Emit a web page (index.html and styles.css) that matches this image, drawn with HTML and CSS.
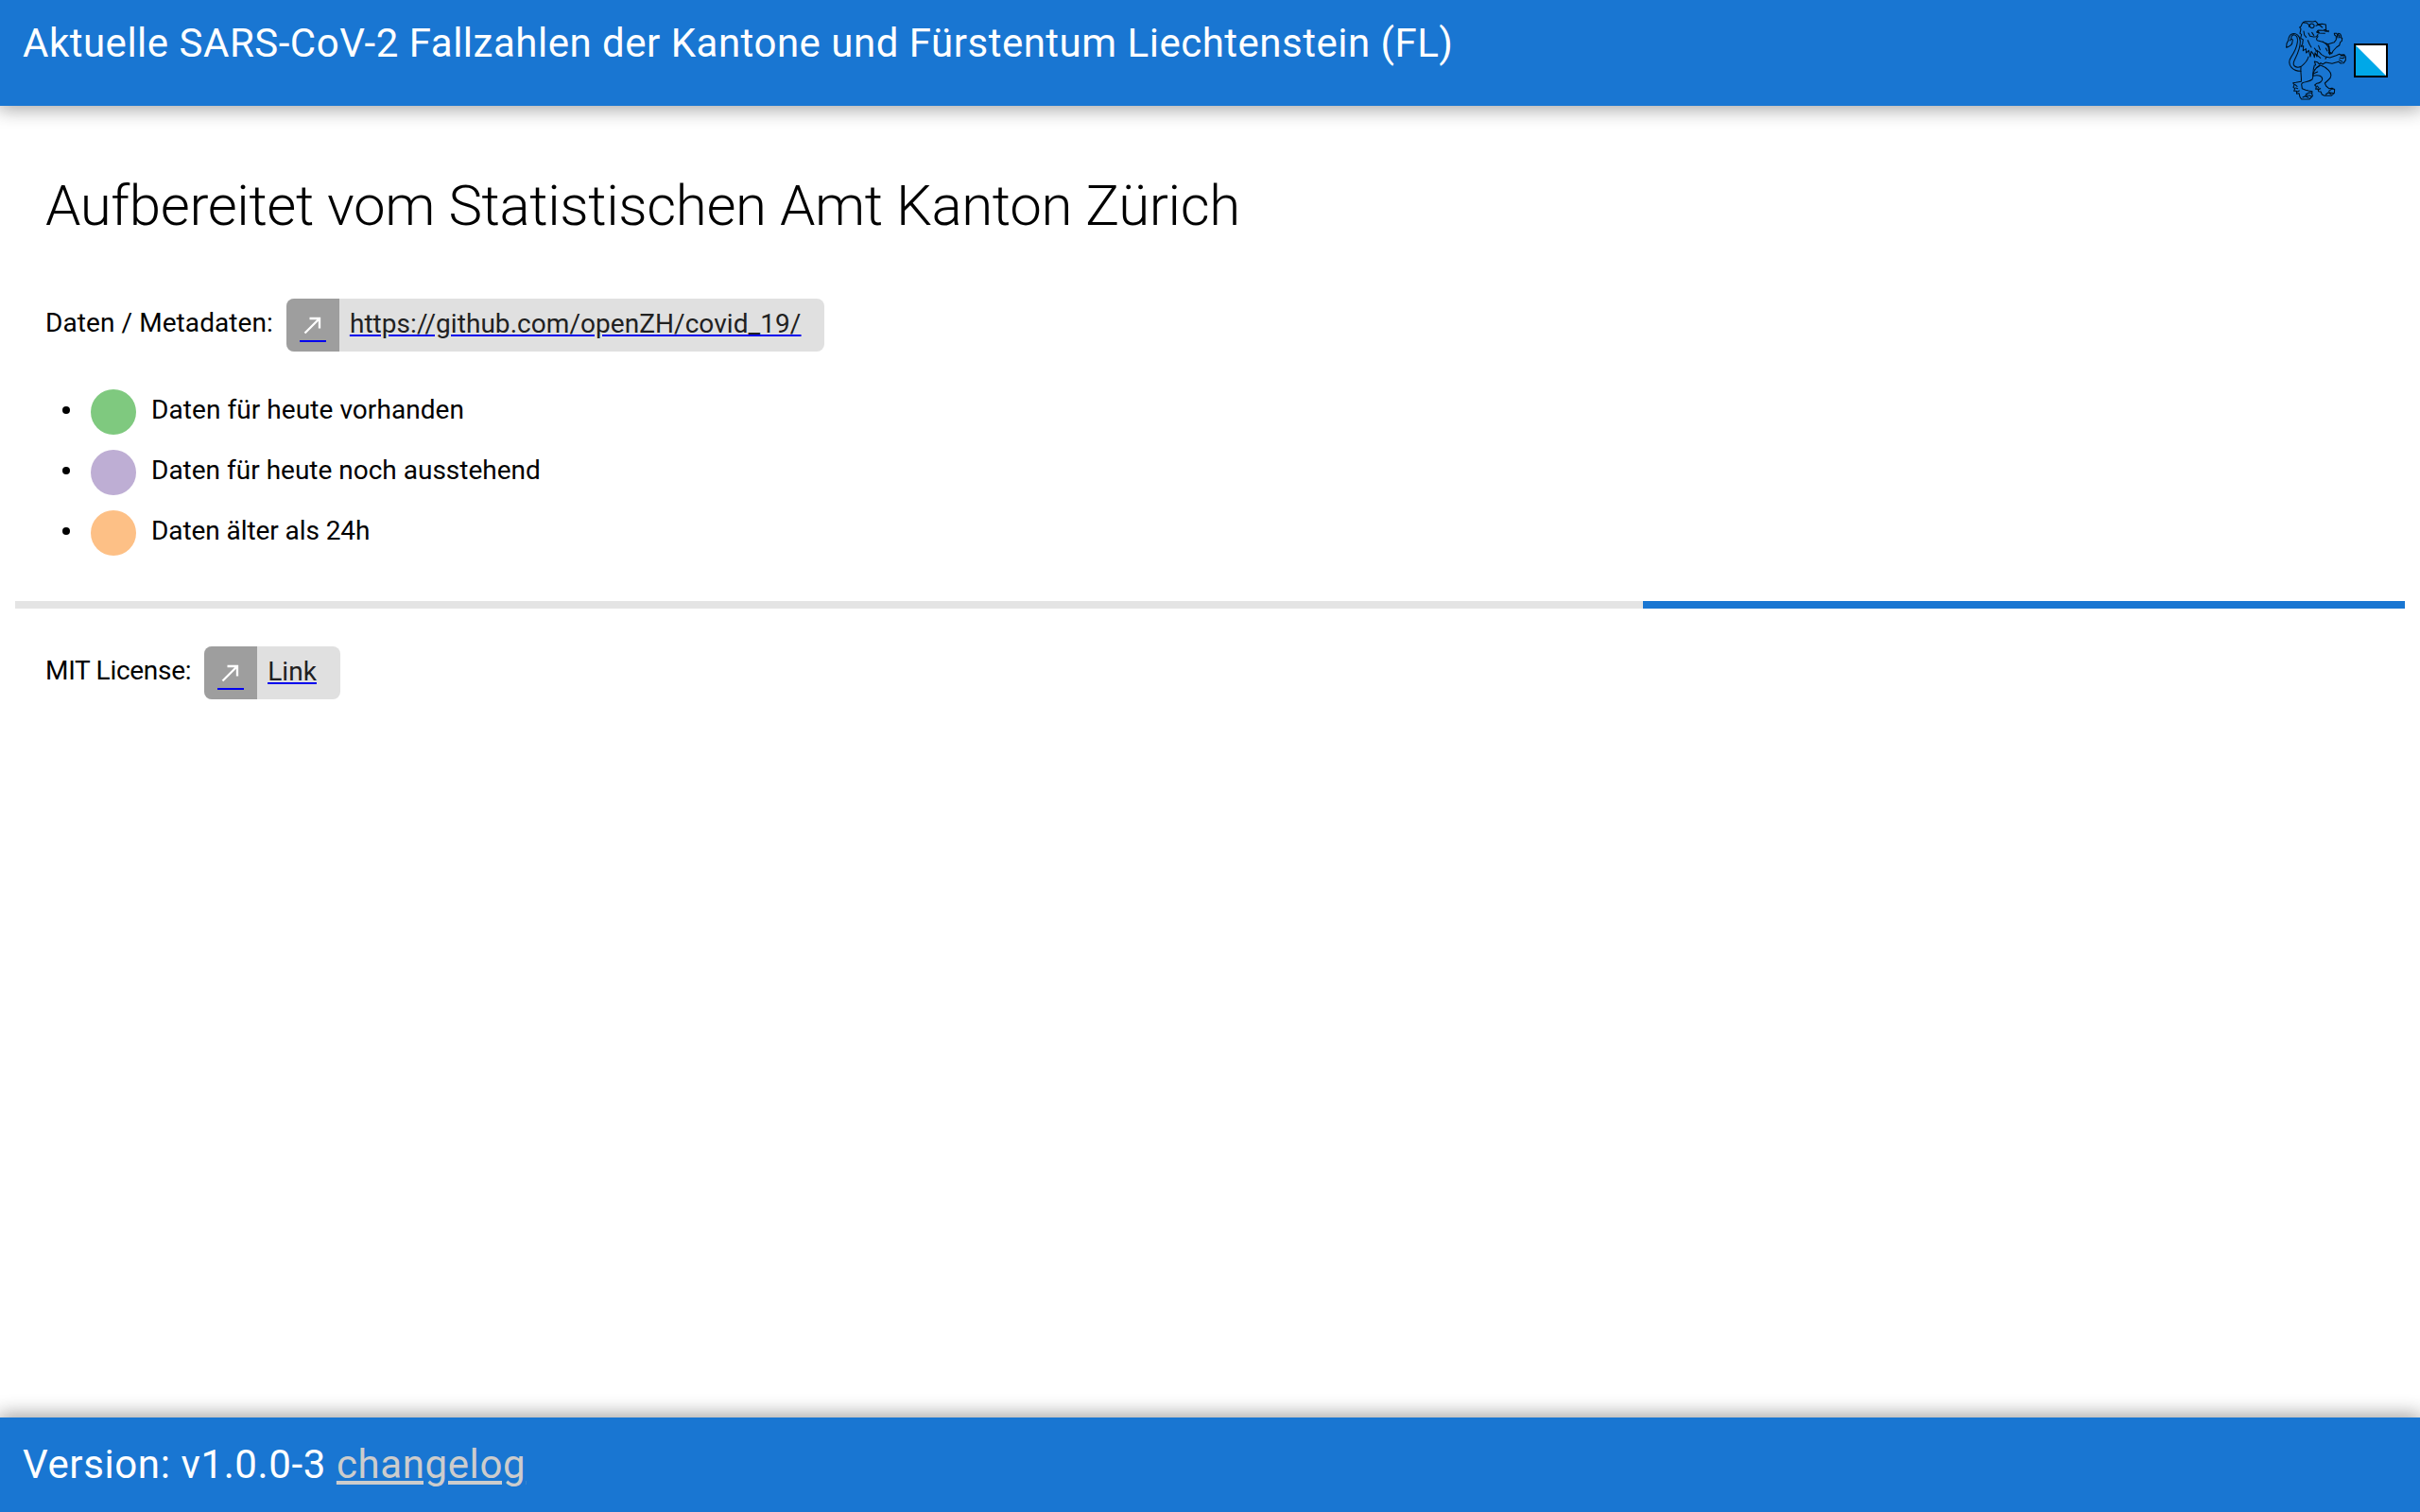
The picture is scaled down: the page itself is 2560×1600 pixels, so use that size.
FILE: index.html
```
<!DOCTYPE html>
<html lang="de">
<head>
<meta charset="utf-8">
<title>SARS-CoV-2 Fallzahlen</title>
<link rel="stylesheet" href="styles.css">
</head>
<body>
<header class="header">
  <div class="title">Aktuelle SARS-CoV-2 Fallzahlen der Kantone und Fürstentum Liechtenstein (FL)</div>
  <svg class="logo" viewBox="48 60 336 264" fill="none" stroke="#00101c" stroke-width="3.2" stroke-linejoin="round" stroke-linecap="round">
    <path d="M129 85l-3-8-6-4-10-1 5-4 13 0 13 1 7-2 4 4 4 6 13-1 12 2 1 16-7 3-17-1-6 6 6 3 18 1M155 97l6 8 17 1M176 94l8 3 6 4M178 99l7 1 5-3M110 70l-4 5-4 9-4 3 4 5-3 14 5 3-3 12 8 5-2 14-5 8 8-2-1 15 9-6 1 13 8-8 5 20 3-17 7 9 3 10 2-15 6 13 2-20M111 99l2 12 6 7M126 105l5 10 11 2 10-1 4-6M124 128l6 14 5 8M137 103l6 9"/>
    <path d="M129 85c0-9 5-11 10-9s7 6 4 10-9 5-12-1M150 82l7-3 8 2M161 80l9 7"/>
    <path d="M156 116c-8 8-4 13 3 14l11 3 18 7 20-6 6-8 0-11-5-4-1-5 8 0 3 8 2-8 6 2 3 7-2 4 5 2-1 9-5 4-3 10-9 6-11 12-4 8-3-3-3 6-4-6M188 140l4 8 2 20M171 132l11 8 7 9 3 17M217 113l2 7M224 112l0 7M158 145l5 13M181 153l5 9"/>
    <path d="M149 162l10 2 8 9 10 6 17 4 20-7 10-4 5 2 10-1 5 7 0 11-6 9-10 1-6-5-21 6-20-4-10 6-6-4-4 4-7-7-9-2 4 12M228 177l11 0M225 184l9 1 6-3M224 190l10 6M151 173l13 11M145 153l8 10M183 181l-3 6"/>
    <path d="M126 180c-3 14-13 23-23 31-8 4-18 3-22-2-6-7-1-15 3-23 8-16 16-32 16-54 0-18-13-29-27-24-9 4-10 12-11 20l-5 10-1 13c6-4 15-3 18-13l2-12-5-2-4 5M71 124c0-8 3-13 8-14 10 0 14 11 12 24-2 18-12 35-20 47-8 12-6 25 1 33 8 9 18 12 30 12"/>
    <path d="M102 214c-2 16 3 31 1 45l-17 3-9 1 4 6-3 8 5 4-3 8 8 0 1 9 7-2 3 12 5 7 25 0 10-10-2-8 1-7-12-2-9-2-11-5-2-14 3-4c10-5 22-3 31-11 6-9-1-23 7-45M118 299l10-5 8 1M117 303l13 0 6 4M108 309l8-4 10 5M84 269l6 5M86 279l6 2M91 291l6-3"/>
    <path d="M160 208l-8 6-11 17-1 10c13-4 29-2 30 9 1 8-9 14-18 15l-6 5 5 5-2 8 7-1 2 8 7 1 4 9 8 4 21 0 10-8 1-12-8-4-10 1-9-8-4-9 10-9c13-10 12-22 2-32-8-8-16-13-26-16M191 289l8-6 9 0M192 293l15 3M181 300l8-6 9 5M141 234l14-6M154 273l5 6M158 284l6-3M146 220l16-11"/>
    <path d="M273 141h102v102H273z" fill="#fff" stroke="none"/>
    <path d="M273 141L375 243H273z" fill="#00a8e8" stroke="none"/>
    <path d="M273 141h102v102H273z" stroke="#000" stroke-width="6" stroke-linejoin="miter"/>
  </svg>
</header>
<main class="page">
  <h1 class="heading">Aufbereitet vom Statistischen Amt Kanton Zürich</h1>
  <div class="row">
    <span class="label-data">Daten / Metadaten:</span>
    <a class="chip" href="#"><span class="avatar"><svg viewBox="0 0 24 24"><path d="M9 5v2h6.590L4 18.590 5.410 20 17 8.410V15h2V5z"/></svg></span><span class="chip-text">https://github.com/openZH/covid_19/</span></a>
  </div>
  <ul class="legend">
    <li><span class="dot today"></span><span class="label-today">Daten für heute vorhanden</span></li>
    <li><span class="dot pending"></span><span>Daten für heute noch ausstehend</span></li>
    <li><span class="dot old"></span><span class="label-old">Daten älter als 24h</span></li>
  </ul>
  <div class="progress"><div class="bar"></div></div>
  <div class="row">
    <span class="label-license">MIT License:</span>
    <a class="chip" href="#"><span class="avatar"><svg viewBox="0 0 24 24"><path d="M9 5v2h6.590L4 18.590 5.410 20 17 8.410V15h2V5z"/></svg></span><span class="chip-text">Link</span></a>
  </div>
</main>
<footer class="footer"><div class="title">Version: v1.0.0-3 <a href="#">changelog</a></div></footer>
</body>
</html>
```
FILE: styles.css
```
* { box-sizing: border-box; }
body {
  margin: 0;
  height: 1600px;
  display: flex;
  flex-direction: column;
  overflow: hidden;
  background: #fff;
  color: #000;
  font: 28px/42px Roboto, "Liberation Sans", sans-serif;
}
.header, .footer {
  display: flex;
  flex: none;
  background: #1976d2;
  color: #fff;
  box-shadow: 0 0 20px 4px rgba(0, 0, 0, .2), 0 0 20px rgba(0, 0, 0, .24);
}
.header { height: 112px; padding: 14px 32px 0 24px; justify-content: space-between; }
.footer { height: 100px; padding: 18px 24px 0; }
.title { font-size: 42px; line-height: 63px; letter-spacing: .507px; }
.footer .title { letter-spacing: .61px; }
.title a { color: #ccc; }
.logo { width: 112px; height: 88px; margin-top: 6px; }
.page { flex: 1; padding: 0 16px; }
.heading {
  margin: 68px 0 0;
  padding-left: 32px;
  font-size: 60px;
  line-height: 76px;
  font-weight: 300;
  letter-spacing: -.39px;
}
.row { display: flex; gap: 14px; padding-left: 32px; height: 56px; }
.row > span { padding-top: 5px; }
.heading + .row { margin-top: 60px; }
.label-data { letter-spacing: .08px; }
.label-license { letter-spacing: -.29px; }
.label-today { letter-spacing: .07px; }
.label-old { letter-spacing: -.08px; }
.chip {
  display: flex;
  height: 56px;
  border-radius: 8px;
  overflow: hidden;
  background: #e0e0e0;
  padding-right: 25px;
  color: #0000ee;
}
.avatar {
  width: 56px;
  height: 56px;
  padding: 14px;
  background: #9e9e9e;
}
.avatar svg {
  display: block;
  width: 28px;
  height: 32px;
  padding-bottom: 2px;
  border-bottom: 2px solid #0000ee;
  fill: #fff;
}
.chip-text {
  margin-left: 11px;
  padding-top: 6px;
  color: #212121;
  letter-spacing: .05px;
  text-decoration: underline;
  text-decoration-color: #0000ee;
}
.legend { margin: 32px 0 0; padding: 0 0 0 50px; list-style: none; }
.legend li { display: flex; height: 64px; padding-top: 9px; }
.legend li::before {
  content: "";
  width: 8px;
  height: 8px;
  margin: 17px 22px 0 0;
  border-radius: 50%;
  background: #000;
}
.dot {
  width: 48px;
  height: 48px;
  margin: -1px 16px 0 0;
  border-radius: 50%;
}
.today { background: #7fc97f; }
.pending { background: #beaed4; }
.old { background: #fdc086; }
.progress { height: 8px; margin: 40px 0; background: #e4e4e4; display: flex; justify-content: flex-end; }
.bar { width: 806px; background: #1976d2; }
```
